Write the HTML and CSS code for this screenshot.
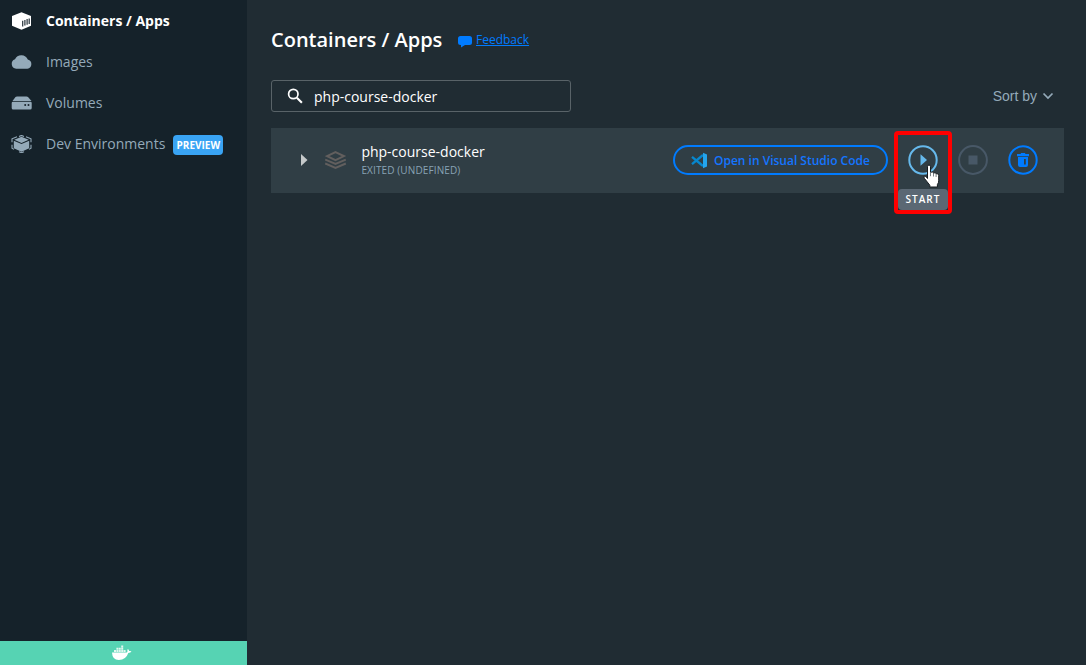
FILE: index.html
```html
<!DOCTYPE html>
<html lang="en">
<head>
<meta charset="utf-8">
<title>Containers / Apps</title>
<link rel="stylesheet" href="styles.css">
</head>
<body>
<div class="app">
  <aside class="sidebar">
    <nav class="nav">
      <a class="nav-item active">
        <svg width="22" height="18" viewBox="0.5 0 22 18"><path fill="#fff" d="M11 .3 20.500 4v9.700L11 17.700 1.500 13.700V4z"/><path fill="none" stroke="#26323a" stroke-width="1.200" d="M12.200 8.800v5.700M14.400 8v5.600M16.600 7.100v5.700M18.700 6.400v5.500"/></svg>
        <span>Containers / Apps</span>
      </a>
      <a class="nav-item">
        <svg width="22" height="18" viewBox="0.5 0.3 22 18"><path fill="currentColor" d="M5.700 16A4.900 4.900 0 0 1 4.500 6.500 7 7 0 0 1 17.300 6.800 4.700 4.700 0 0 1 16.900 16z"/></svg>
        <span>Images</span>
      </a>
      <a class="nav-item">
        <svg width="22" height="18" viewBox="0.5 0.5 22 18"><path fill="currentColor" d="M2 7.600 5 3.500Q5.500 3 6.500 3h9.500q1 0 1.500.5l3.500 4.100zM2.500 8.200H20q1.200 0 1.200 1.200v5.100q0 1.500-1.500 1.500h-17Q1.200 16 1.200 14.500V9.400q0-1.200 1.300-1.200z"/><circle cx="14.700" cy="11.600" r="1" fill="#16222a"/><circle cx="18" cy="11.600" r="1" fill="#16222a"/></svg>
        <span>Volumes</span>
      </a>
      <a class="nav-item">
        <svg width="22" height="18" viewBox="0.5 0.3 22 18"><path fill="currentColor" d="m11 2 7.200 3-7.200 3.300L3.800 5zM3.300 6l7.700 3.400L18.700 6v7.500L11 17l-7.700-3.500z"/><path fill="none" stroke="currentColor" stroke-width="1.100" d="M8.500 1.700 11 .7l2.500 1M15.500 2l5 2.100v3.400M20.500 10v3.500l-2 1.200M13.500 17l-2.500 1-2.500-1M3.500 14.700l-2-1.200V10M1.500 7.500V4.100l5-2.100"/></svg>
        <span>Dev Environments</span><b class="badge">PREVIEW</b>
      </a>
    </nav>
    <footer class="status">
      <svg width="22" height="16" viewBox="0 0 22 16"><path fill="#fff" d="M1 7.500h14.700q1-.2.700-1.600-.2-1 .4-1.900 1.200.7 1.300 2 1.400-.2 2.400.3-.7 1.700-3.200 1.800Q15 15 7.800 15 1.300 15 1 7.500z"/><path fill="#e2f7f0" d="M3 5h2v2H3zM5.400 5h2v2h-2zM7.800 5h2v2h-2zM10.200 5h2v2h-2zM12.600 5h2v2h-2zM5.400 2.700h2v2h-2zM7.800 2.700h2v2h-2zM10.200 2.700h2v2h-2zM10.200 .4h2v2h-2z"/></svg>
    </footer>
  </aside>
  <main class="content">
    <header class="heading">
      <h1>Containers / Apps</h1>
      <svg class="bubble" width="14" height="13" viewBox="0 0 14 13"><path fill="#007bff" d="M2.500 1h9Q14 1 14 3.500v4Q14 10 11.500 10H7l-4 2.500V10H2.500Q0 10 0 7.500v-4Q0 1 2.500 1z"/></svg>
      <a class="feedback">Feedback</a>
    </header>
    <div class="toolbar">
      <div class="search">
        <svg width="18" height="18" viewBox="0 0 18 18" fill="none" stroke="#fff"><circle cx="7.300" cy="7" r="4.700" stroke-width="1.700"/><path stroke-width="2.100" d="m10.900 10.700 5 5"/></svg>
        <span>php-course-docker</span>
      </div>
      <div class="sort"><span>Sort by</span><svg width="12" height="8" viewBox="0 0 12 8"><path fill="none" stroke="currentColor" stroke-width="1.700" d="m1.500 1.500 4.500 4.500 4.500-4.500"/></svg></div>
    </div>
    <section class="row">
      <svg class="caret" width="7" height="12" viewBox="0 0 7 12"><path fill="#c5c9ca" d="M0 0 6.500 6 0 12z"/></svg>
      <svg class="stack" width="22" height="20" viewBox="0.5 0 22 20" fill="none" stroke="#625f5e" stroke-width="2"><path d="m11 2.100 8.400 4L11 10.100l-8.400-4zM.7 9.600 11 14l10.300-4.400M.7 13.500 11 17.900l10.300-4.400"/></svg>
      <div class="info"><div class="name">php-course-docker</div><div class="state">EXITED (UNDEFINED)</div></div>
      <button class="vscode">
        <svg width="17" height="17" viewBox="0.500 0 17 17"><path fill="none" stroke="#0787ce" stroke-width="2.300" d="M12.500 3 1.500 12.100M1.500 4.900l11 9.100"/><path fill="#24a5ed" d="m12.500 .7 4 1.800v12l-4 1.800z"/></svg>
        <span>Open in Visual Studio Code</span>
      </button>
      <div class="actions">
        <div class="start">
          <svg width="30" height="30" viewBox="0 0 30 30"><circle cx="15" cy="15" r="13.700" fill="none" stroke="#66b9ec" stroke-width="2"/><path fill="#66b9ec" d="m12.500 9.300 6.500 5.700-6.500 5.700z"/></svg>
          <div class="highlight"><span class="tooltip">START</span></div>
          <svg class="cursor" width="18" height="24" viewBox="0 0 18 24"><path fill="#fff" stroke="#151b1f" stroke-width="1" d="M4.500 14.500V2.700q0-1.700 1.500-1.700t1.500 1.700v5.600q2.300-1 3 .7 2-.8 2.600.7 2.600-.6 2.600 1.600v5.500q0 2.100-1.300 3.700V23H6.800v-1.800L1.500 14.500Q.2 12.800 1.500 12q1.300-.5 3 2.500z"/><path fill="none" stroke="#535d63" stroke-width=".8" d="M7.500 8.500v3.700M10.500 9v3.500M13.100 10v3"/></svg>
        </div>
        <svg width="30" height="30" viewBox="0 0 30 30"><circle cx="15" cy="15" r="13.900" fill="none" stroke="#485867" stroke-width="2"/><path fill="#485867" d="M10.500 10.500h9v9h-9z"/></svg>
        <svg width="30" height="30" viewBox="0 0 30 30"><circle cx="15" cy="15" r="13.700" fill="none" stroke="#007bff" stroke-width="2"/><path fill="#007bff" fill-rule="evenodd" d="M12.800 8h4.400v1H21v2.300H9V9h3.800zM10 12h10v8q0 2-2 2h-6q-2 0-2-2zM16 14h1.800v5.500H16z"/></svg>
      </div>
    </section>
  </main>
</div>
</body>
</html>
```
FILE: styles.css
```css
* { box-sizing: border-box; }
body { margin: 0; background: #202c33; color: #fff; font-family: "Open Sans", "Noto Sans", sans-serif; }
svg { display: block; flex-shrink: 0; }
.app { display: flex; height: 665px; overflow: hidden; }
.sidebar { width: 247px; flex-shrink: 0; background: #15222a; display: flex; flex-direction: column; justify-content: space-between; }
.nav-item { display: flex; align-items: center; height: 41px; padding-left: 11px; color: #94aab9; font-size: 14px; white-space: nowrap; }
.nav-item span { margin-left: 13px; }
.nav-item.active { color: #fff; font-weight: 700; }
.badge { margin: 3px 0 0 8px; width: 50px; height: 20px; border-radius: 4px; background: #39a4f4; color: #fff; font-size: 10px; line-height: 20px; text-align: center; }
.status { height: 24px; background: #56d3b3; display: flex; align-items: center; justify-content: center; padding-right: 4px; }
.content { flex: 1; padding: 24px 22px 0 24px; }
.heading { display: flex; align-items: center; height: 32px; }
h1 { margin: 0; width: 187px; font-size: 20px; font-weight: 600; line-height: 32px; white-space: nowrap; }
.bubble { margin-top: 3px; }
.feedback { margin: 0 0 2px 4px; color: #007bff; font-size: 12px; text-decoration: underline; }
.toolbar { display: flex; justify-content: space-between; align-items: center; height: 32px; margin-top: 24px; }
.search { width: 300px; height: 32px; display: flex; align-items: center; padding-left: 14px; border: 1px solid #596368; border-radius: 3px; font-size: 14px; }
.search span { margin: 1px 0 0 10px; }
.sort { display: flex; align-items: center; gap: 5px; padding-right: 10px; color: #94aab9; font: 14px "Liberation Sans", Arial, sans-serif; }
.row { display: flex; align-items: center; height: 65px; margin-top: 16px; padding: 0 0 1px 30px; background: #303e45; }
.caret { margin-right: 17px; }
.info { margin-left: 14px; width: 312px; }
.name { font-size: 14px; line-height: 19px; padding-left: .4px; }
.state { color: #89a3b4; font-size: 10px; line-height: 18px; letter-spacing: .12px; padding-left: .4px; }
.vscode { display: flex; align-items: center; width: 215px; height: 30px; padding: 1px 0 0 16px; border: 2px solid #007bff; border-radius: 15px; background: transparent; color: #1475ff; font: 600 12px "Open Sans", sans-serif; white-space: nowrap; }
.vscode span { margin-left: 6px; }
.actions { display: flex; gap: 20px; margin-left: 20px; }
.start { position: relative; }
/* Highlight and pointer overlay the start control. */
.highlight { position: absolute; left: -14px; top: -14px; width: 58px; height: 83px; display: flex; align-items: flex-end; border: 4px solid #f00; border-radius: 4px; }
.tooltip { width: 50px; height: 21px; border-radius: 4px; background: #5b6874; font-size: 10px; font-weight: 600; letter-spacing: 1px; line-height: 21px; text-align: center; }
.cursor { position: absolute; left: 15px; top: 19px; }
```
